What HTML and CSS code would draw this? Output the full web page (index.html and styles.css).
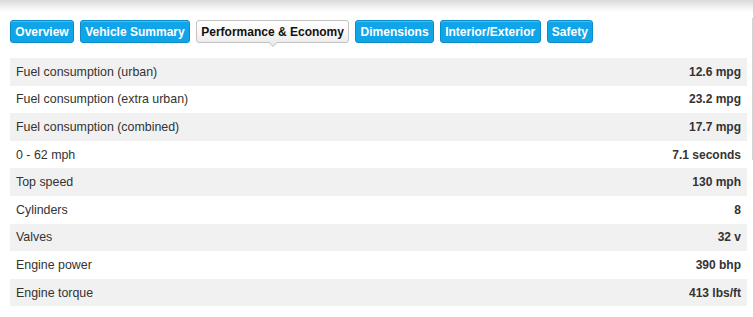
FILE: index.html
```html
<!DOCTYPE html>
<html>
<head>
<meta charset="utf-8">
<link rel="stylesheet" href="styles.css">
</head>
<body>
<div class="page">
  <div class="topshade"></div>
  <div class="edge"></div>
  <nav class="tabs">
    <span class="tab">Overview</span>
    <span class="tab">Vehicle Summary</span>
    <span class="tab active">Performance &amp; Economy</span>
    <span class="tab">Dimensions</span>
    <span class="tab">Interior/Exterior</span>
    <span class="tab">Safety</span>
  </nav>
  <div class="specs">
    <div class="row"><span class="label">Fuel consumption (urban)</span><span class="value">12.6 mpg</span></div>
    <div class="row"><span class="label">Fuel consumption (extra urban)</span><span class="value">23.2 mpg</span></div>
    <div class="row"><span class="label">Fuel consumption (combined)</span><span class="value">17.7 mpg</span></div>
    <div class="row"><span class="label">0 - 62 mph</span><span class="value">7.1 seconds</span></div>
    <div class="row"><span class="label">Top speed</span><span class="value">130 mph</span></div>
    <div class="row"><span class="label">Cylinders</span><span class="value">8</span></div>
    <div class="row"><span class="label">Valves</span><span class="value">32 v</span></div>
    <div class="row"><span class="label">Engine power</span><span class="value">390 bhp</span></div>
    <div class="row"><span class="label">Engine torque</span><span class="value">413 lbs/ft</span></div>
  </div>
</div>
</body>
</html>
```
FILE: styles.css
```css
html, body {
  margin: 0;
  padding: 0;
  background: #fff;
}
body {
  font-family: "Liberation Sans", Arial, sans-serif;
  font-size: 12px;
  color: #333;
}
.page {
  position: relative;
  width: 753px;
  height: 317px;
  overflow: hidden;
}
.topshade {
  height: 12px;
  background: linear-gradient(to bottom, #d9d9d9 0%, #ececec 45%, #ffffff 100%);
}
.edge {
  position: absolute;
  right: 0;
  top: 18px;
  width: 1px;
  height: 142px;
  background: #d4d4d4;
}
.tabs {
  display: flex;
  gap: 6px;
  padding: 8px 0 0 10px;
  height: 23px;
}
.tab {
  box-sizing: border-box;
  height: 23px;
  padding: 0 4.3px;
  display: flex;
  align-items: center;
  background: #10a4e8;
  border: 1px solid #0b8cc8;
  border-radius: 3px;
  color: #fff;
  font-weight: bold;
  font-size: 12px;
  box-shadow: inset 0 1px 0 rgba(255,255,255,0.25);
}
.tab.active {
  position: relative;
  background: linear-gradient(to bottom, #ffffff 0%, #f7f7f7 60%, #ececec 100%);
  border-color: #c4c4c4;
  color: #111;
  box-shadow: none;
}
.tab.active::after {
  content: "";
  position: absolute;
  left: 50%;
  bottom: -5px;
  margin-left: -5px;
  width: 0;
  height: 0;
  border-left: 5px solid transparent;
  border-right: 5px solid transparent;
  border-top: 5px solid #bdbdbd;
}
.tab.active::before {
  content: "";
  position: absolute;
  left: 50%;
  bottom: -4px;
  margin-left: -4px;
  width: 0;
  height: 0;
  border-left: 4px solid transparent;
  border-right: 4px solid transparent;
  border-top: 4px solid #ececec;
  z-index: 1;
}
.specs {
  margin: 15px 6px 0 10px;
}
.row {
  display: flex;
  justify-content: space-between;
  align-items: center;
  height: 27.6px;
  padding: 0 6px;
}
.row:nth-child(odd) {
  background: #f1f1f1;
}
.label {
  color: #333;
  font-size: 12.4px;
}
.value {
  font-weight: bold;
  color: #333;
}
```
